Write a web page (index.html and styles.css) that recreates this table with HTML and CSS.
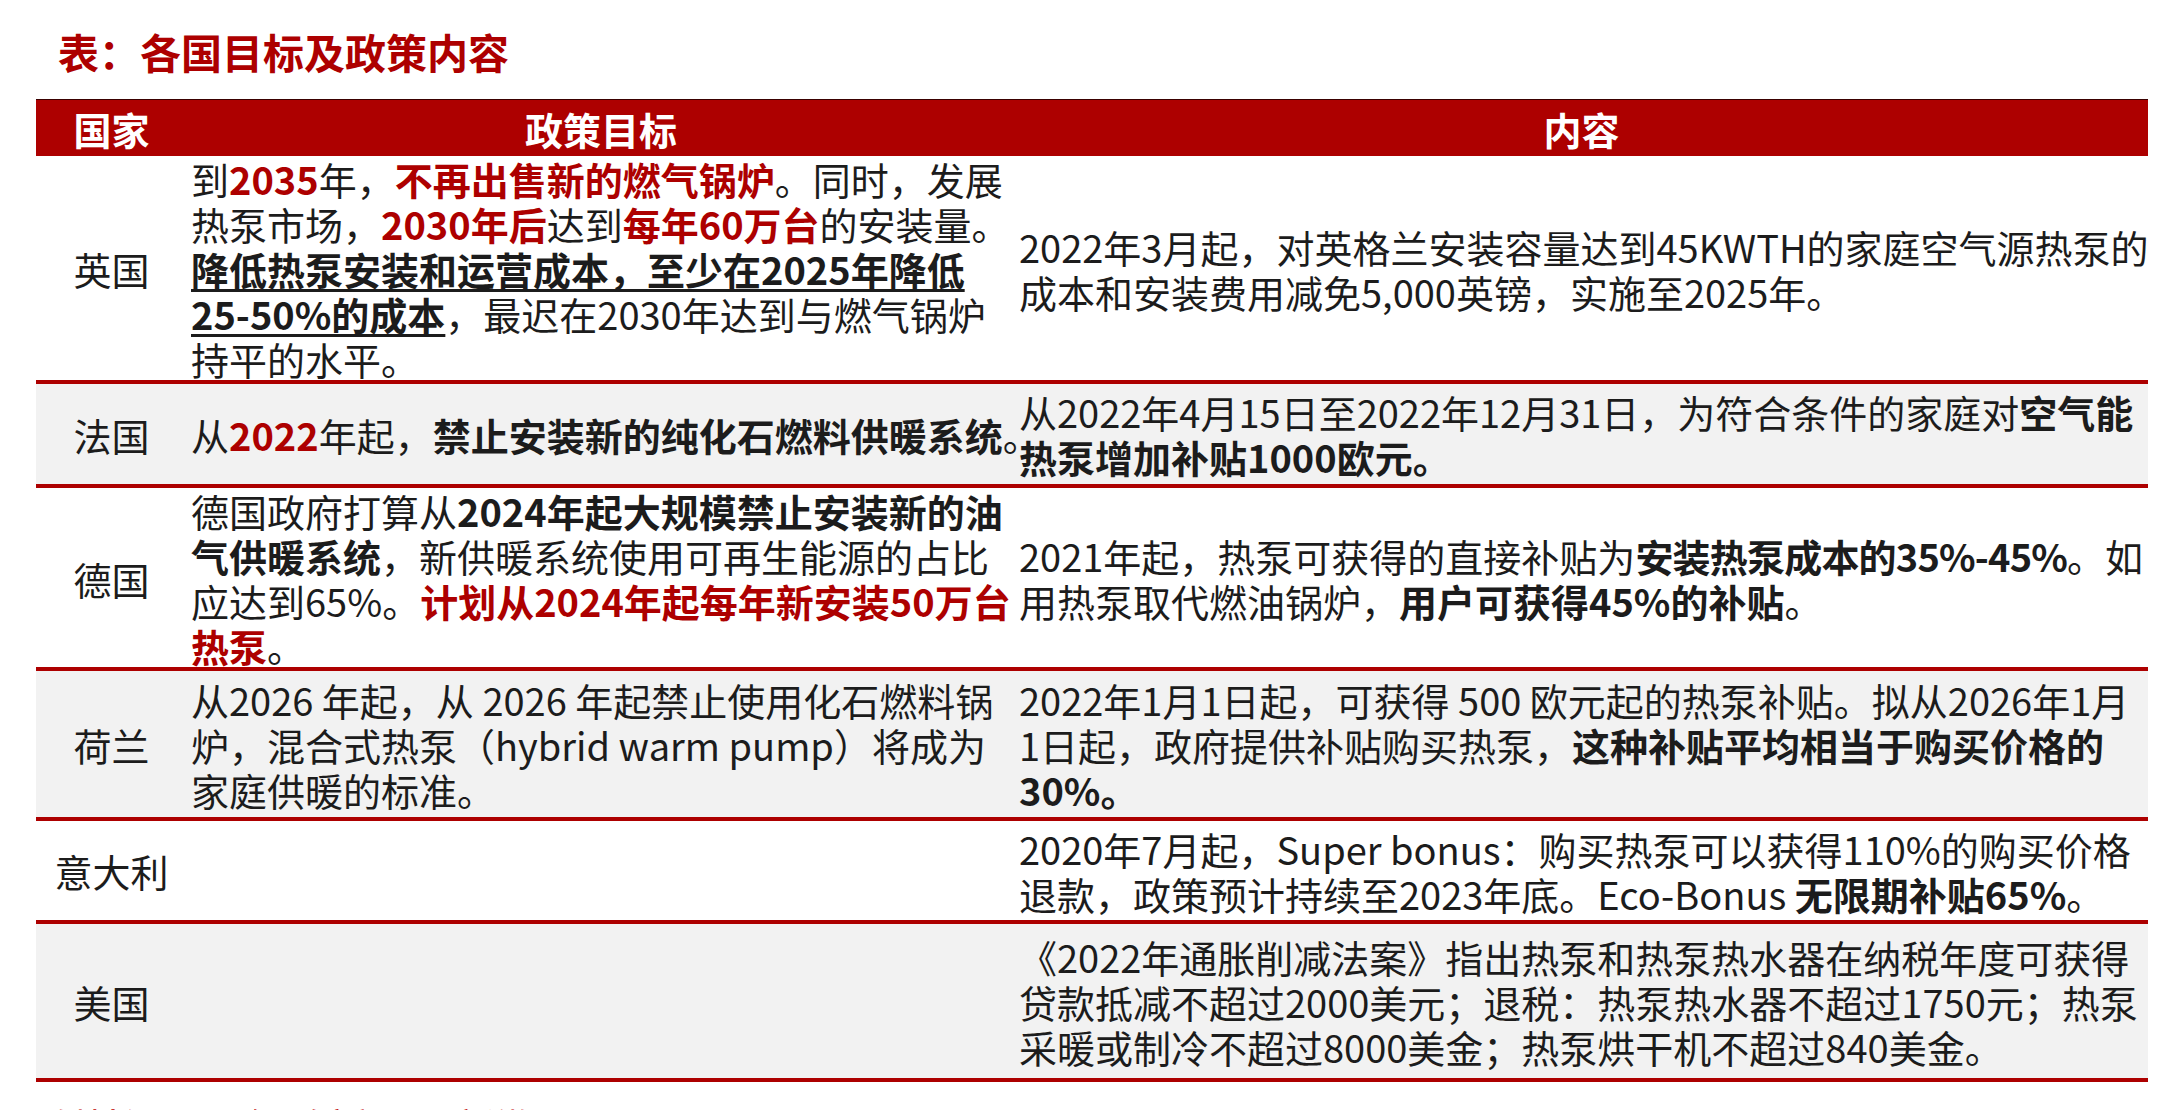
FILE: index.html
```html
<!DOCTYPE html>
<html lang="zh-CN">
<head>
<meta charset="utf-8">
<title>表：各国目标及政策内容</title>
<link rel="stylesheet" href="styles.css">
</head>
<body>
<h1 class="title">表：各国目标及政策内容</h1>
<div class="table">
  <div class="row head">
    <div class="cell c1"><p>国家</p></div>
    <div class="cell c2"><p>政策目标</p></div>
    <div class="cell c3"><p>内容</p></div>
  </div>
  <div class="row r-uk">
    <div class="cell c1"><p>英国</p></div>
    <div class="cell c2"><p>到<span class="r">2035</span>年，<span class="r">不再出售新的燃气锅炉</span>。同时，发展<br>热泵市场，<span class="r">2030年后</span>达到<span class="r">每年60万台</span>的安装量。<br><span class="b u">降低热泵安装和运营成本，至少在2025年降低</span><br><span class="b u">25-50%的成本</span>，最迟在2030年达到与燃气锅炉<br>持平的水平。</p></div>
    <div class="cell c3"><p>2022年3月起，对英格兰安装容量达到45KWTH的家庭空气源热泵的<br>成本和安装费用减免5,000英镑，实施至2025年。</p></div>
  </div>
  <div class="row alt r-fr">
    <div class="cell c1"><p>法国</p></div>
    <div class="cell c2"><p>从<span class="r">2022</span>年起，<span class="b">禁止安装新的纯化石燃料供暖系统</span>。</p></div>
    <div class="cell c3"><p>从2022年4月15日至2022年12月31日，为符合条件的家庭对<span class="b">空气能<br>热泵增加补贴1000欧元。</span></p></div>
  </div>
  <div class="row r-de">
    <div class="cell c1"><p>德国</p></div>
    <div class="cell c2"><p>德国政府打算从<span class="b">2024年起大规模禁止安装新的油<br>气供暖系统</span>，新供暖系统使用可再生能源的占比<br>应达到65%。<span class="r">计划从2024年起每年新安装50万台<br>热泵</span>。</p></div>
    <div class="cell c3"><p>2021年起，热泵可获得的直接补贴为<span class="b tight">安装热泵成本的35%-45%</span>。如<br>用热泵取代燃油锅炉，<span class="b">用户可获得45%的补贴</span>。</p></div>
  </div>
  <div class="row alt r-nl">
    <div class="cell c1"><p>荷兰</p></div>
    <div class="cell c2"><p>从2026 年起，从 2026 年起禁止使用化石燃料锅<br>炉，混合式热泵（hybrid warm pump）将成为<br>家庭供暖的标准。</p></div>
    <div class="cell c3"><p>2022年1月1日起，可获得 500 欧元起的热泵补贴。拟从2026年1月<br>1日起，政府提供补贴购买热泵，<span class="b">这种补贴平均相当于购买价格的<br>30%。</span></p></div>
  </div>
  <div class="row r-it">
    <div class="cell c1"><p>意大利</p></div>
    <div class="cell c2"><p></p></div>
    <div class="cell c3"><p>2020年7月起，Super bonus：购买热泵可以获得110%的购买价格<br>退款，政策预计持续至2023年底。Eco-Bonus <span class="b">无限期补贴65%</span>。</p></div>
  </div>
  <div class="row alt r-us">
    <div class="cell c1"><p>美国</p></div>
    <div class="cell c2"><p></p></div>
    <div class="cell c3"><p>《2022年通胀削减法案》指出热泵和热泵热水器在纳税年度可获得<br>贷款抵减不超过2000美元；退税：热泵热水器不超过1750元；热泵<br>采暖或制冷不超过8000美金；热泵烘干机不超过840美金。</p></div>
  </div>
</div>
<p class="source">资料来源：IEA，各国政府官网，研究所整理</p>
</body>
</html>
```

FILE: styles.css
```css
html, body {
  margin: 0;
  padding: 0;
  background: #ffffff;
}

body {
  font-family: "Noto Sans CJK SC", "Noto Sans", sans-serif;
  color: #1c1c1c;
  overflow: hidden;
  height: 1110px;
}

.title {
  margin: 23px 0 0 58px;
  font-size: 41px;
  line-height: 56px;
  font-weight: 700;
  color: #ad0000;
}

.table {
  margin: 20px 0 0 36px;
  width: 2112px;
}

.row {
  display: grid;
  grid-template-columns: 151px 828px 1fr;
  border-bottom: 4px solid #ad0000;
  font-size: 38px;
  line-height: 45px;
  background: #ffffff;
}

.row.alt {
  background: #f2f2f2;
}

.head {
  height: 56px;
  background: #ad0000;
  border-top: 1px solid #3a0000;
  border-bottom: 0;
  color: #ffffff;
  font-weight: 700;
}

.r-uk { height: 224px; }
.r-fr { height: 100px; }
.r-de { height: 179px; }
.r-nl { height: 146px; }
.r-it { height: 99px; }
.r-us { height: 154px; }

.cell {
  display: flex;
  align-items: center;
  min-width: 0;
}

.cell p {
  margin: 0;
  white-space: nowrap;
}

.c1 {
  justify-content: center;
}

.c2, .c3 {
  padding-left: 4px;
}

.head .c2, .head .c3 {
  justify-content: center;
  padding-left: 0;
}

.b {
  font-weight: 700;
}

.tight {
  letter-spacing: -0.8px;
}

.r {
  font-weight: 700;
  color: #ad0000;
}

.u {
  text-decoration: underline;
  text-decoration-thickness: 3px;
  text-underline-offset: 4px;
}

.source {
  margin: 21px 0 0 48px;
  font-size: 26px;
  line-height: 36px;
  color: #c00000;
  font-weight: 700;
}
```
